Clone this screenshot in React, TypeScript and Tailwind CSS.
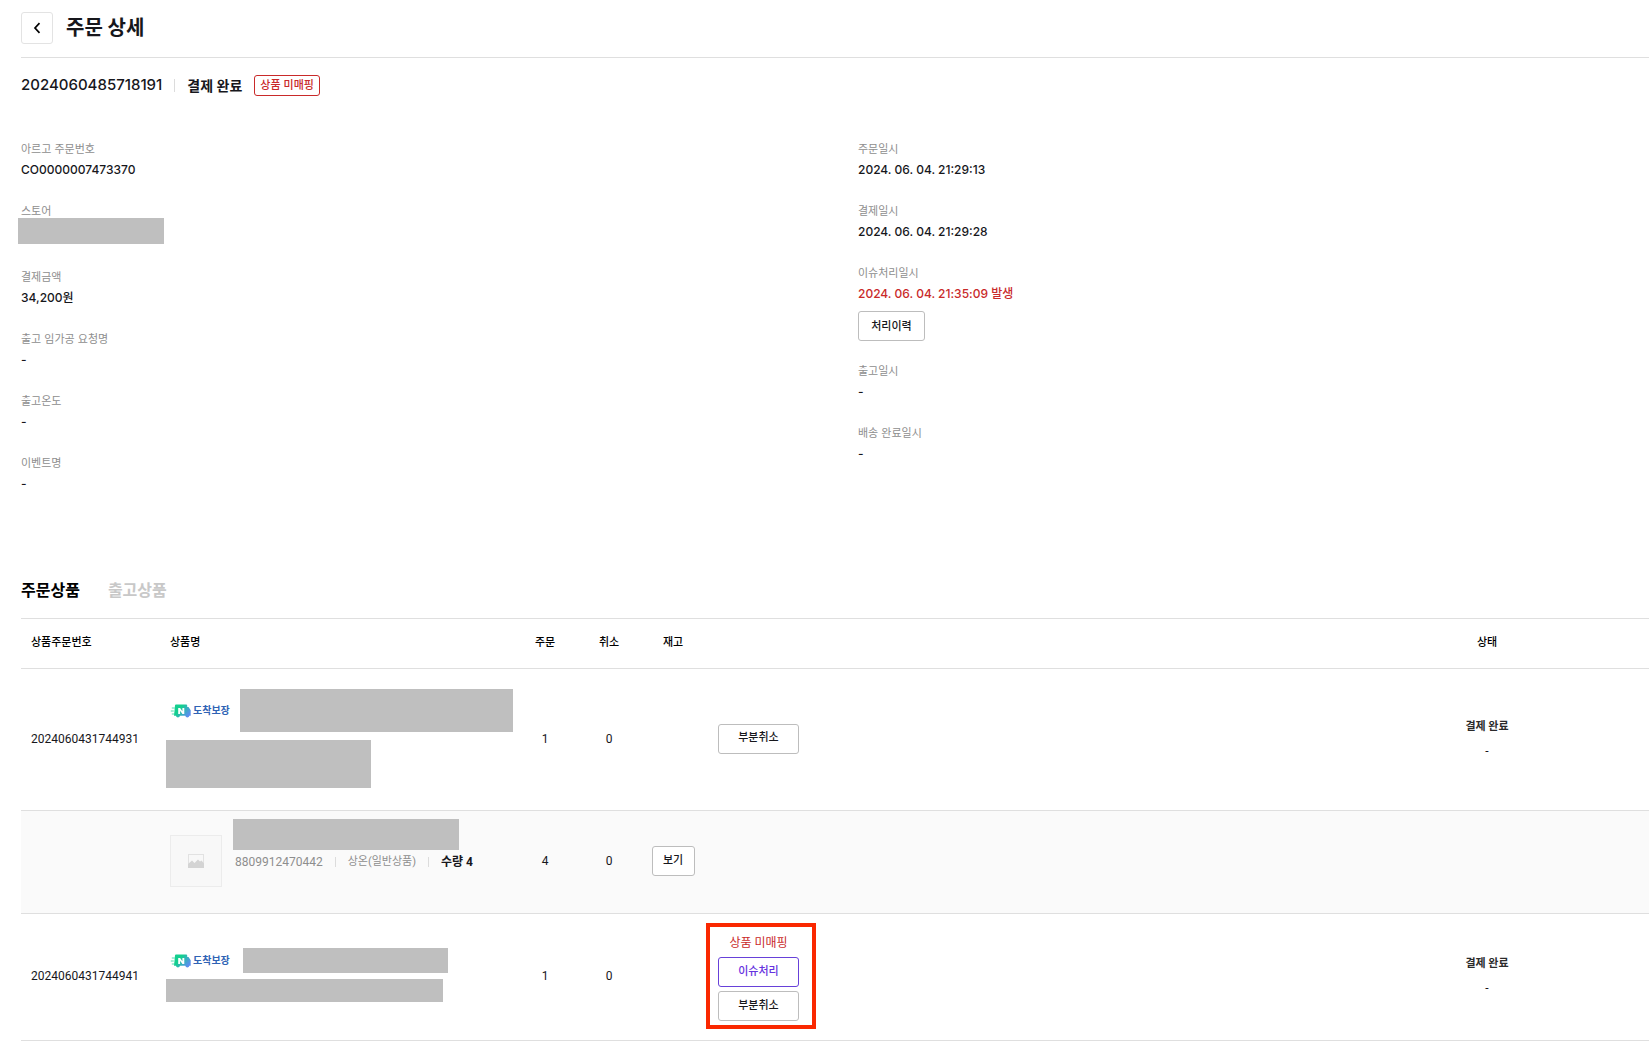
import type { ReactNode } from 'react';
import { clsx } from 'clsx';

type DetailItem = {
  label: string;
  value: string;
};

const paymentDetails: DetailItem[] = [
  { label: '결제금액', value: '34,200원' },
  { label: '출고 임가공 요청명', value: '-' },
  { label: '출고온도', value: '-' },
  { label: '이벤트명', value: '-' },
];

function Detail({ label, children, danger }: { label: string; children: ReactNode; danger?: boolean }) {
  return (
    <div>
      <dt className="text-[11px] leading-4 text-[#8e8e8e]">{label}</dt>
      <dd className={clsx('mt-0.5 text-xs leading-[22px] font-medium', danger ? 'text-[#c92a2a]' : 'text-[#17171c]')}>
        {children}
      </dd>
    </div>
  );
}

// Grey block over private data
function Masked({ className }: { className: string }) {
  return <div className={clsx('bg-[#bfbfbf]', className)} />;
}

function Button({ children, className }: { children: ReactNode; className?: string }) {
  return (
    <button
      type="button"
      className={clsx('block h-[30px] rounded-[3px] border bg-white text-[11px] font-medium', className || 'w-[81px] border-[#bdbdbd] text-[#17171c]')}
    >
      {children}
    </button>
  );
}

function ArrivalBadge() {
  return (
    <span className="flex items-center gap-0.5">
      <svg width="21" height="16" viewBox="0 0 21 16" aria-hidden="true">
        <defs>
          <linearGradient id="truck" x1="0" y1="0" x2="1" y2="0.6">
            <stop offset="0.4" stopColor="#14cf8f" />
            <stop offset="1" stopColor="#5b8df0" />
          </linearGradient>
        </defs>
        <path d="M1.8 5h3M0.8 8h3M1.8 11h3" stroke="#4fdcb0" strokeWidth="1.2" />
        <path
          d="M6 1.5h10.2a1 1 0 0 1 1 1V4h1.3l2.2 3.2v5.6h-1.3a2.1 2.1 0 0 1-4.1 0H10a2.1 2.1 0 0 1-4.1 0H4l1-10.3a1 1 0 0 1 1-1z"
          fill="url(#truck)"
        />
        <path d="M8.2 11V5h1.9l2.3 3.2V5h1.9v6h-1.9l-2.3-3.2V11z" fill="#fff" />
      </svg>
      <span className="text-[10px] leading-4 font-bold text-[#2f63b5]">도착보장</span>
    </span>
  );
}

function ImagePlaceholder() {
  return (
    <div className="flex h-[52px] w-[52px] items-center justify-center border border-[#ececec] bg-[#f8f8f8]">
      <svg width="16" height="14" viewBox="0 0 16 14" aria-hidden="true">
        <rect x="0.5" y="0.5" width="15" height="13" fill="none" stroke="#e2e2e2" />
        <path d="M0 14V10l4-3.5 2.5 2.5L10 5.5l2 2 1.5-1L16 9.5V14z" fill="#d4d4d4" />
      </svg>
    </div>
  );
}

function Status() {
  return (
    <>
      <p className="text-[11px] leading-6 font-bold text-[#2b2b2b]">결제 완료</p>
      <p className="leading-6">-</p>
    </>
  );
}

export default function App() {
  return (
    <main className="min-h-screen bg-white pl-[21px] font-['Inter','Noto_Sans_CJK_KR',sans-serif] text-[#17171c]">
      <header className="flex items-center gap-[13px] border-b border-[#dfdfdf] pt-3 pb-[13px]">
        <button
          type="button"
          aria-label="뒤로"
          className="flex h-8 w-8 items-center justify-center rounded-[3px] border border-[#e3e3e3]"
        >
          <svg width="16" height="16" viewBox="0 0 16 16" fill="none" stroke="#000" strokeWidth="1.7" aria-hidden="true">
            <path d="M10.5 3.2 6 8l4.5 4.8" />
          </svg>
        </button>
        <h1 className="text-xl leading-7 font-bold">주문 상세</h1>
      </header>

      <div className="mt-[17px] flex h-[21px] items-center">
        <span className="text-[15px] font-medium">2024060485718191</span>
        <span className="mx-3 h-[13px] w-px bg-[#dcdcdc]" />
        <span className="text-sm font-semibold">결제 완료</span>
        <span className="ml-3 flex h-[21px] items-center rounded-[3px] border border-[#c92a2a] px-[5px] text-[11px] font-medium text-[#c92a2a]">
          상품 미매핑
        </span>
      </div>

      <section className="mt-[45px] grid grid-cols-2 gap-x-[46px]">
        <dl className="flex flex-col gap-[22px]">
          <Detail label="아르고 주문번호">CO0000007473370</Detail>
          <div>
            <dt className="text-[11px] leading-4 text-[#8e8e8e]">스토어</dt>
            <dd className="-mt-px -ml-[3px] pb-[3px]">
              <Masked className="h-[26px] w-[146px]" />
            </dd>
          </div>
          {paymentDetails.map(item => (
            <Detail key={item.label} label={item.label}>{item.value}</Detail>
          ))}
        </dl>

        <dl className="flex flex-col gap-[22px]">
          <Detail label="주문일시">2024. 06. 04. 21:29:13</Detail>
          <Detail label="결제일시">2024. 06. 04. 21:29:28</Detail>
          <Detail label="이슈처리일시" danger>
            2024. 06. 04. 21:35:09 발생
            <Button className="mt-1.5 w-[67px] border-[#bdbdbd] text-[#17171c]">처리이력</Button>
          </Detail>
          <Detail label="출고일시">-</Detail>
          <Detail label="배송 완료일시">-</Detail>
        </dl>
      </section>

      <section className="mt-[83px]">
        <div role="tablist" className="flex gap-7 border-b border-[#dfdfdf] pb-4 text-base leading-6 font-bold">
          <button type="button" role="tab" aria-selected="true" className="text-black">주문상품</button>
          <button type="button" role="tab" aria-selected="false" className="text-[#c8c8c8]">출고상품</button>
        </div>

        <table className="w-full table-fixed border-separate border-spacing-0 font-['Roboto','Noto_Sans_CJK_KR',sans-serif] text-xs [&_td]:border-b [&_td]:border-[#dfdfdf] [&_td]:pb-0.5 [&_th]:border-b [&_th]:border-[#dfdfdf]">
          <colgroup>
            <col className="w-[139px]" />
            <col className="w-[353px]" />
            <col className="w-16" />
            <col className="w-16" />
            <col className="w-16" />
            <col />
            <col className="w-[324px]" />
          </colgroup>
          <thead className="text-[11px] text-black">
            <tr className="h-[50px]">
              <th className="pl-2.5 text-left font-medium">상품주문번호</th>
              <th className="pl-2.5 text-left font-medium">상품명</th>
              <th className="font-medium">주문</th>
              <th className="font-medium">취소</th>
              <th className="font-medium">재고</th>
              <th />
              <th className="font-medium">상태</th>
            </tr>
          </thead>
          <tbody>
            <tr className="h-[142px]">
              <td className="pl-2.5">2024060431744931</td>
              <td className="pl-1.5">
                <div className="flex items-center justify-between pl-1">
                  <ArrivalBadge />
                  <Masked className="h-[43px] w-[273px]" />
                </div>
                <Masked className="mt-2 h-12 w-[205px]" />
              </td>
              <td className="text-center">1</td>
              <td className="text-center">0</td>
              <td />
              <td className="pl-[13px]">
                <Button>부분취소</Button>
              </td>
              <td className="text-center"><Status /></td>
            </tr>

            <tr className="h-[103px] bg-[#fafafa]">
              <td />
              <td className="pl-2.5">
                <div className="flex items-center gap-[11px]">
                  <ImagePlaceholder />
                  <div className="pb-8">
                    <Masked className="h-[31px] w-[226px]" />
                    <div className="mt-0.5 flex items-center pl-0.5 leading-5 text-[#8e8e8e]">
                      <span>8809912470442</span>
                      <span className="mx-3 h-2.5 w-px bg-[#dcdcdc]" />
                      <span className="text-[11px]">상온(일반상품)</span>
                      <span className="mx-3 h-2.5 w-px bg-[#dcdcdc]" />
                      <strong className="font-bold text-[#17171c]">수량 4</strong>
                    </div>
                  </div>
                </div>
              </td>
              <td className="text-center">4</td>
              <td className="text-center">0</td>
              <td>
                <Button className="mx-auto w-[43px] border-[#bdbdbd] text-[#17171c]">보기</Button>
              </td>
              <td />
              <td />
            </tr>

            <tr className="h-[127px]">
              <td className="pl-2.5">2024060431744941</td>
              <td className="pl-1.5">
                <div className="flex items-center gap-[13px] pl-1">
                  <ArrivalBadge />
                  <Masked className="h-[25px] w-[205px]" />
                </div>
                <Masked className="mt-1.5 mb-0.5 h-[23px] w-[277px]" />
              </td>
              <td className="text-center">1</td>
              <td className="text-center">0</td>
              <td />
              <td className="pl-px">
                <div className="flex w-[110px] flex-col gap-1 border-4 border-[#fa2800] pt-1.5 pr-[13px] pb-1 pl-2">
                  <p className="text-center leading-5 text-[#c92a2a]">상품 미매핑</p>
                  <Button className="w-[81px] border-[#6741d9] text-[#6633e0]">이슈처리</Button>
                  <Button>부분취소</Button>
                </div>
              </td>
              <td className="text-center"><Status /></td>
            </tr>
          </tbody>
        </table>
      </section>
    </main>
  );
}
